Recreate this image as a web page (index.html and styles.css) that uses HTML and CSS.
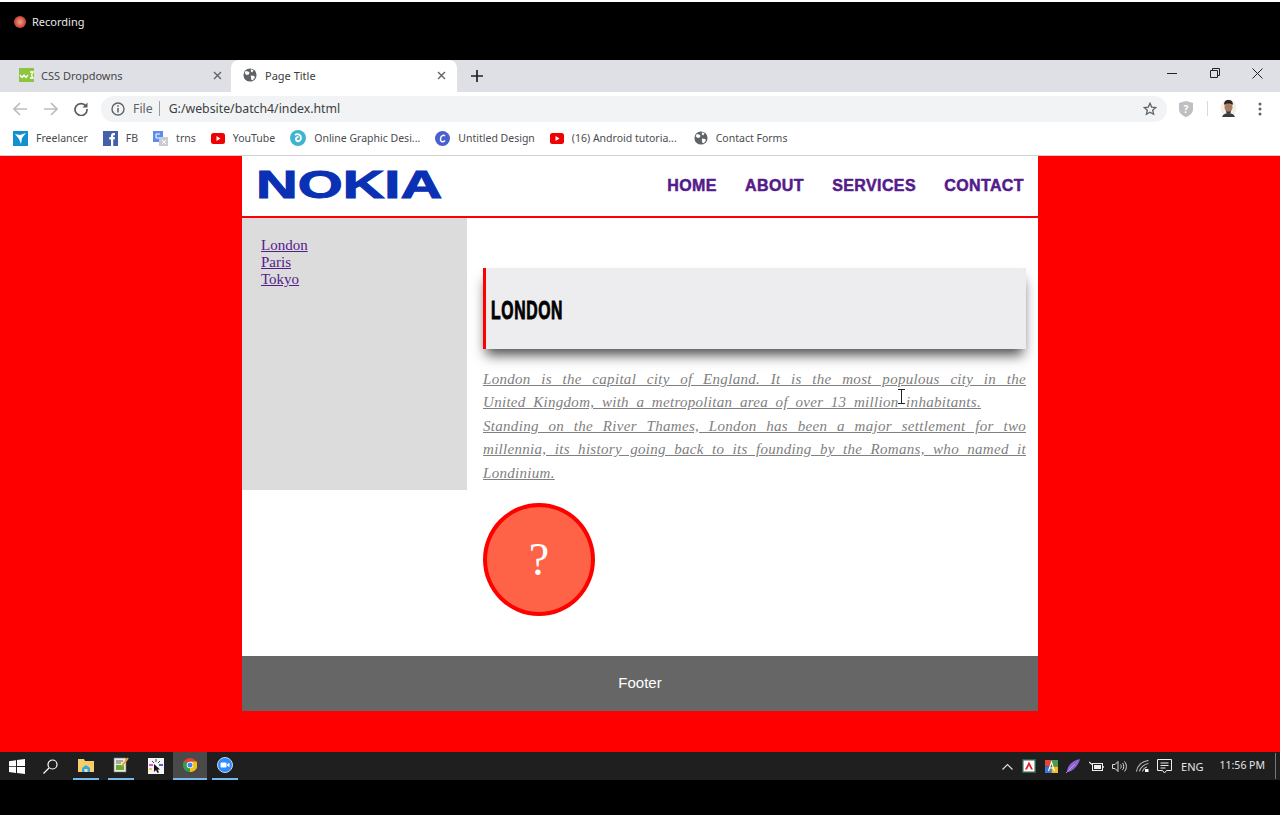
FILE: index.html
```html
<!DOCTYPE html>
<html lang="en">
<head>
  <meta charset="UTF-8" />
  <meta name="viewport" content="width=device-width, initial-scale=1.0" />
  <title>Page Title</title>
  <link rel="stylesheet" href="styles.css">
</head>
<body>
  <svg class="defs" width="0" height="0">
    <symbol id="globe" viewBox="0 0 16 16">
      <circle cx="8" cy="8" r="7.500" fill="#5f6368"/>
      <path d="M3 3.500l3 .5 1.500 1.500-1 2-2.500.5-2-2zM9 1.500l3 1-1.500 2.500-1.500-1zM9 8.500l4 .5.500 2-2.500 3-1.500-.5-.5-3z" fill="#fff"/>
    </symbol>
    <symbol id="yt" viewBox="0 0 14 11">
      <rect width="14" height="11" rx="2.500" fill="#f00000"/>
      <path d="M5.500 3v5l4-2.500z" fill="#fff"/>
    </symbol>
  </svg>

  <div class="screen">
    <div class="rec-bar">
      <span class="rec-dot"></span>
      <span>Recording</span>
    </div>

    <div class="tabstrip">
      <div class="tab">
        <svg class="fav" width="15" height="14" viewBox="0 0 15 14"><rect width="15" height="14" fill="#8cc63f"/><path d="M1 7l2 2.500 2-2.500 2 2.500 2-2.500M11 4h3l-1.500 3 1.500 3h-3" fill="none" stroke="#fff" stroke-width="1.300"/></svg>
        <span class="tab-title">CSS Dropdowns</span>
        <svg class="tab-x" width="9" height="9" viewBox="0 0 9 9"><path d="M1 1l7 7M8 1l-7 7" stroke="#5f6368" stroke-width="1.400"/></svg>
      </div>
      <div class="tab tab-active">
        <svg class="fav" width="14" height="14"><use href="#globe"/></svg>
        <span class="tab-title">Page Title</span>
        <svg class="tab-x" width="9" height="9" viewBox="0 0 9 9"><path d="M1 1l7 7M8 1l-7 7" stroke="#5f6368" stroke-width="1.400"/></svg>
      </div>
      <svg class="new-tab" width="12" height="12" viewBox="0 0 12 12"><path d="M6 0v12M0 6h12" stroke="#222" stroke-width="1.700"/></svg>
      <div class="win-btns">
        <svg width="10" height="10" viewBox="0 0 10 10"><path d="M0 5.500h10" stroke="#222" stroke-width="1"/></svg>
        <svg width="10" height="10" viewBox="0 0 10 10"><path d="M.5 2.500h7v7h-7zM2.500 2.500v-2h7v7h-2" fill="none" stroke="#222" stroke-width="1"/></svg>
        <svg width="11" height="11" viewBox="0 0 11 11"><path d="M.5.500l10 10M10.500.500l-10 10" stroke="#222" stroke-width="1"/></svg>
      </div>
    </div>

    <div class="toolbar">
      <div class="nav-btns">
        <svg width="14" height="14" viewBox="0 0 14 14"><path d="M14 7H1.500M7 1L1 7l6 6" fill="none" stroke="#bcbdc0" stroke-width="1.700"/></svg>
        <svg width="14" height="14" viewBox="0 0 14 14"><path d="M0 7h12.500M7 1l6 6-6 6" fill="none" stroke="#bcbdc0" stroke-width="1.700"/></svg>
        <svg width="14" height="14" viewBox="0 0 14 14"><path d="M12 4.200A6 6 0 1 0 13 7" fill="none" stroke="#5a5c60" stroke-width="1.700"/><path d="M13.500.500v5h-5z" fill="#5a5c60"/></svg>
      </div>
      <div class="omnibox">
        <svg width="14" height="14" viewBox="0 0 14 14"><circle cx="7" cy="7" r="6" fill="none" stroke="#5f6368" stroke-width="1.400"/><path d="M7 6v4.500M7 3.200v1.600" stroke="#5f6368" stroke-width="1.500"/></svg>
        <span class="scheme">File</span>
        <span class="url">G:/website/batch4/index.html</span>
        <svg class="star" width="14" height="14" viewBox="0 0 14 14"><path d="M7 1.300l1.700 3.800 4.100.4-3.100 2.700.9 4.100L7 10.200l-3.600 2.100.9-4.100L1.200 5.500l4.100-.4z" fill="none" stroke="#5f6368" stroke-width="1.300"/></svg>
      </div>
      <svg class="shield" width="14" height="16" viewBox="0 0 14 16"><path d="M7 0l7 2v6c0 4-3 6.500-7 8-4-1.500-7-4-7-8V2z" fill="#bdbfc2"/><text x="7" y="12" text-anchor="middle" class="shield-q">?</text></svg>
      <span class="tool-sep"></span>
      <svg class="avatar" width="17" height="19" viewBox="0 0 17 19"><ellipse cx="8.500" cy="9" rx="8" ry="9" fill="#f3eee8"/><ellipse cx="8.500" cy="8" rx="4" ry="5" fill="#a77d62"/><path d="M4 6c0-4 2-5 4.500-5S13 2 13 6c-2-2-7-2-9 0z" fill="#2a2523"/><path d="M6 11c1 2 4 2 5 0l-.5 3h-4z" fill="#3a302c"/><path d="M2 18c1-3 4-4 6.500-4s5.500 1 6.500 4z" fill="#3b3a3c"/></svg>
      <svg class="dots" width="4" height="14" viewBox="0 0 4 14"><circle cx="2" cy="2" r="1.500" fill="#5f6368"/><circle cx="2" cy="7" r="1.500" fill="#5f6368"/><circle cx="2" cy="12" r="1.500" fill="#5f6368"/></svg>
    </div>

    <div class="bookmarks">
      <a class="bm">
        <svg width="15" height="15" viewBox="0 0 15 15"><rect width="15" height="15" fill="#1291d0"/><path d="M2 3l5 1 6-2-4 5-1 6-2-5z" fill="#fff"/></svg>
        <span>Freelancer</span>
      </a>
      <a class="bm">
        <svg width="15" height="15" viewBox="0 0 15 15"><rect width="15" height="15" fill="#4460a8"/><path d="M8 15V8.500H6.300V6H8V4.500C8 3 9 2 10.300 2h1.700v2.300h-1c-.6 0-.8.300-.8.800V6H12l-.4 2.500h-1.400V15z" fill="#fff"/></svg>
        <span>FB</span>
      </a>
      <a class="bm">
        <svg width="15" height="15" viewBox="0 0 15 15"><rect width="10" height="11" fill="#5b8def"/><rect x="6" y="6" width="9" height="9" fill="#c9ccd2"/><path d="M3 3h4M3 3v4h3M9 9l4 4M13 9l-4 4" fill="none" stroke="#fff" stroke-width="1"/></svg>
        <span>trns</span>
      </a>
      <a class="bm">
        <svg width="14" height="11"><use href="#yt"/></svg>
        <span>YouTube</span>
      </a>
      <a class="bm">
        <svg width="16" height="16" viewBox="0 0 16 16"><circle cx="8" cy="8" r="8" fill="#3fb4cf"/><path d="M5 5c3-2 6 0 6 3s-3 4-4.500 2.500S6 7 8.500 7" fill="none" stroke="#fff" stroke-width="1.800"/></svg>
        <span>Online Graphic Desi...</span>
      </a>
      <a class="bm">
        <svg width="15" height="15" viewBox="0 0 15 15"><circle cx="7.500" cy="7.500" r="7.500" fill="#4a5fd0"/><path d="M10 5C8.500 3.500 6 4.500 5.500 7.500S7.500 12 10 9.500" fill="none" stroke="#fff" stroke-width="1.400"/></svg>
        <span>Untitled Design</span>
      </a>
      <a class="bm">
        <svg width="14" height="11"><use href="#yt"/></svg>
        <span>(16) Android tutoria...</span>
      </a>
      <a class="bm bm-last">
        <svg width="14" height="14"><use href="#globe"/></svg>
        <span>Contact Forms</span>
      </a>
    </div>

    <div class="viewport">
      <div class="wrap">
        <header class="site-head">
          <div class="logo"><span>NOKIA</span></div>
          <nav class="main-nav">
            <a href="#">HOME</a>
            <a href="#">ABOUT</a>
            <a href="#">SERVICES</a>
            <a href="#">CONTACT</a>
          </nav>
        </header>

        <div class="columns">
          <aside class="side">
            <a href="#">London</a>
            <a href="#">Paris</a>
            <a href="#">Tokyo</a>
          </aside>
          <main class="content">
            <div class="title-card"><h2>LONDON</h2></div>
            <p class="intro">London is the capital city of England. It is the most populous city in the United Kingdom, with a metropolitan area of over 13 million inhabitants.<br>Standing on the River Thames, London has been a major settlement for two millennia, its history going back to its founding by the Romans, who named it Londinium.</p>
            <div class="circle">?</div>
            <svg class="ibeam" width="7" height="15" viewBox="0 0 7 15"><path d="M0 .5h7M0 14.500h7M3.500 .5v14" stroke="#222" stroke-width="1" fill="none"/></svg>
          </main>
        </div>

        <footer class="site-foot">Footer</footer>
      </div>
    </div>

    <div class="taskbar">
      <div class="task-left">
        <svg class="t-win" width="16" height="15" viewBox="0 0 16 15"><path d="M0 2.200l7-1v6H0zM8 1l8-1v7H8zM0 8h7v6l-7-1zM8 8h8v7l-8-1z" fill="#fff"/></svg>
        <svg class="t-search" width="15" height="15" viewBox="0 0 15 15"><circle cx="9.500" cy="5.500" r="4.500" fill="none" stroke="#fff" stroke-width="1.200"/><path d="M6 9l-5.500 5.500" stroke="#fff" stroke-width="1.300"/></svg>
        <span class="t-app on">
          <svg width="16" height="14" viewBox="0 0 16 14"><path d="M0 1h6l1 2h9v11H0z" fill="#f5cd6b"/><path d="M4 14v-4l4-3 4 3v4z" fill="#3aa6de"/><path d="M6.500 14v-3h3v3z" fill="#f5e3a8"/></svg>
        </span>
        <span class="t-app on">
          <svg width="16" height="16" viewBox="0 0 16 16"><rect x="1" y="1" width="12" height="14" fill="#e9ecdf" stroke="#777" stroke-width=".6"/><rect x="3" y="8" width="8" height="5" fill="#6aa834"/><path d="M3 4h7M3 6h5" stroke="#666" stroke-width="1"/><path d="M15 1L9 9" stroke="#e8a33a" stroke-width="2"/></svg>
        </span>
        <span class="t-app">
          <svg width="16" height="16" viewBox="0 0 16 16"><rect width="16" height="16" fill="#f4f4f4"/><path d="M1 7h4" stroke="#d61fd6" stroke-width="1.500"/><path d="M11 7h4" stroke="#2a2ad0" stroke-width="1.500"/><path d="M8 1v3M4 3l2 2M12 3l-2 2" stroke="#444" stroke-width="1"/><path d="M6 6l0 8 2-2 1.500 3 1.500-.8-1.500-2.700h2.500z" fill="#111"/><path d="M1 11h3" stroke="#e8c020" stroke-width="1.500"/></svg>
        </span>
        <span class="t-app t-active on">
          <svg width="14" height="14" viewBox="0 0 14 14"><circle cx="7" cy="7" r="7" fill="#db4437"/><path d="M7 7L1 3.500A7 7 0 0 0 7 14z" fill="#2f9e4f"/><path d="M7 3.500h6.500A7 7 0 0 1 7 14z" fill="#f4c20d"/><circle cx="7" cy="7" r="3.300" fill="#fff"/><circle cx="7" cy="7" r="2.500" fill="#4285f4"/></svg>
        </span>
        <span class="t-app on">
          <svg width="16" height="16" viewBox="0 0 16 16"><circle cx="8" cy="8" r="7.500" fill="#2d8cff" stroke="#c9d6e6" stroke-width="1"/><rect x="3.500" y="5.500" width="6" height="5" rx="1" fill="#fff"/><path d="M10 7.500l2.500-1.800v4.600L10 8.500z" fill="#fff"/></svg>
        </span>
      </div>
      <div class="tray">
        <svg class="t-slot" width="11" height="7" viewBox="0 0 11 7"><path d="M.5 6.500l5-5 5 5" fill="none" stroke="#ddd" stroke-width="1.200"/></svg>
        <svg class="t-slot" width="14" height="14" viewBox="0 0 14 14"><rect width="14" height="14" fill="#2f5f48"/><rect x="1.500" y="1.500" width="11" height="11" fill="#fff"/><path d="M7 2.500l4 8H9L7 6.500 5 10.500H3z" fill="#e3202c"/></svg>
        <svg class="t-slot" width="13" height="13" viewBox="0 0 13 13"><rect width="6.500" height="6.500" fill="#e2483a"/><rect x="6.500" width="6.500" height="6.500" fill="#4a9b4e"/><rect y="6.500" width="6.500" height="6.500" fill="#3b78d8"/><rect x="6.500" y="6.500" width="6.500" height="6.500" fill="#f1bd2b"/><path d="M3.500 11L6.500 2l3 9M4.800 8h3.400" fill="none" stroke="#fff" stroke-width="1.100"/></svg>
        <svg class="t-slot" width="14" height="14" viewBox="0 0 14 14"><path d="M14 0C8 1 2 5 1 12l1.500 1C6 12 12 8 14 0z" fill="#8f62d8"/><path d="M0 14L9 5" stroke="#c6a9f2" stroke-width=".8"/></svg>
        <svg class="t-slot" width="15" height="11" viewBox="0 0 15 11"><rect x="3.500" y="2.500" width="10" height="7" fill="none" stroke="#eee" stroke-width="1"/><rect x="5" y="4" width="7" height="4" fill="#eee"/><path d="M14 5v2" stroke="#eee" stroke-width="1.500"/><path d="M0 1l3 2.500" stroke="#eee" stroke-width="1.200"/></svg>
        <svg class="t-slot" width="15" height="13" viewBox="0 0 15 13"><path d="M.5 4.500h2.500l3-3v10l-3-3H.5z" fill="none" stroke="#ddd" stroke-width="1"/><path d="M8.500 4.500c1 1 1 3 0 4M10.500 3c1.700 2 1.700 5 0 7M12.500 1.500c2.500 3 2.500 7 0 10" fill="none" stroke="#ddd" stroke-width="1"/></svg>
        <svg class="t-slot" width="13" height="12" viewBox="0 0 13 12"><path d="M.5 11.500C1 6 6 1 12.500.5M3.500 11.500C4 8 8 4 12.500 3.500M6.500 11.500C7 10 9 7 11 7" fill="none" stroke="#bbb" stroke-width="1.100"/><rect x="9" y="9" width="3.500" height="3" fill="#fff"/></svg>
        <svg class="t-slot" width="15" height="15" viewBox="0 0 15 15"><path d="M.5.500h14v11H9.500l-2 2.500-2-2.500H.5z" fill="none" stroke="#eee" stroke-width="1"/><path d="M3.500 4h8M3.500 6.500h8M3.500 9h5" stroke="#eee" stroke-width="1"/></svg>
        <span class="lang">ENG</span>
        <span class="clock">11:56 PM</span>
        <span class="show-desk"></span>
      </div>
    </div>
    <div class="bottom-bar"></div>
  </div>
</body>
</html>
```

FILE: styles.css
```css
body {
  margin: 0;
  background: #fff;
  font-family: "Noto Sans", "Open Sans", sans-serif;
  overflow: hidden;
}
a {
  text-decoration: none;
}
.defs {
  position: absolute;
}
.screen {
  width: 1280px;
  height: 815px;
  padding-top: 2px;
  box-sizing: border-box;
  display: flex;
  flex-direction: column;
}

/* recording bar */
.rec-bar {
  height: 58px;
  background: #000;
  color: #e8e8e8;
  font-size: 11px;
  display: flex;
  align-items: flex-start;
  padding: 12px 0 0 14px;
  box-sizing: border-box;
  gap: 6px;
}
.rec-dot {
  width: 12px;
  height: 12px;
  margin-top: 2px;
  border-radius: 50%;
  background: radial-gradient(circle, #f0a090 0%, #c9402f 70%, #8a3328 100%);
}

/* browser chrome */
.tabstrip {
  height: 32px;
  background: #dfe0e5;
  display: flex;
  align-items: center;
  font-size: 11px;
  color: #45474b;
}
.tab {
  height: 32px;
  box-sizing: border-box;
  width: 231px;
  display: flex;
  align-items: center;
  padding: 0 9px 2px 19px;
}
.tab-active {
  width: 226px;
  padding-left: 12px;
  padding-right: 11px;
  background: #fff;
  border-radius: 8px 8px 0 0;
  color: #3c3c3c;
}
.fav {
  flex: none;
  margin-right: 7px;
}
.tab-active .fav {
  margin-right: 8px;
}
.tab-title {
  flex: 1;
}
.new-tab {
  margin-left: 14px;
}
.win-btns {
  margin-left: auto;
  width: 96px;
  margin-right: 17px;
  display: flex;
  justify-content: space-between;
  align-items: center;
  margin-top: -6px;
}
.toolbar {
  height: 32px;
  box-sizing: border-box;
  padding-top: 1px;
  background: #fff;
  display: flex;
  align-items: center;
}
.nav-btns {
  width: 101px;
  padding-left: 13px;
  padding-right: 13px;
  box-sizing: border-box;
  display: flex;
  justify-content: space-between;
}
.omnibox {
  width: 1066px;
  height: 26px;
  box-sizing: border-box;
  background: #f1f3f4;
  border-radius: 13px;
  display: flex;
  align-items: center;
  padding: 0 10px;
  font-size: 12.300px;
  color: #3c4043;
}
.scheme {
  margin-left: 8px;
  padding-right: 6px;
  border-right: 1px solid #9a9ea3;
  line-height: 15px;
  color: #5f6368;
}
.url {
  margin-left: 9px;
  flex: 1;
}
.shield {
  margin-left: 12px;
}
.shield-q {
  font-size: 10px;
  font-weight: 700;
  fill: #fff;
}
.tool-sep {
  width: 1px;
  height: 15px;
  background: #d8d9db;
  margin-left: 14px;
}
.avatar {
  margin-left: 12px;
}
.dots {
  margin-left: 21px;
}
.bookmarks {
  height: 32px;
  box-sizing: border-box;
  background: #fff;
  border-bottom: 1px solid #d0d1d3;
  display: flex;
  align-items: center;
  padding: 0 0 3px 13px;
  gap: 15px;
  font-size: 10.500px;
  color: #4a4c50;
}
.bm {
  display: flex;
  align-items: center;
  gap: 8px;
}
.bm-last {
  margin-left: 2px;
}

/* the page being viewed */
.viewport {
  flex: 1;
  background: #f00;
}
.wrap {
  width: 796px;
  margin-left: 242px;
  background: #fff;
}
.site-head {
  height: 62px;
  box-sizing: border-box;
  border-bottom: 2px solid #f00;
  display: flex;
  align-items: center;
  justify-content: space-between;
  padding: 0 14px 2px 14px;
}
.logo span {
  display: block;
  font-family: "Liberation Sans", Arial, sans-serif;
  font-weight: 700;
  font-size: 38px;
  line-height: 36px;
  color: #0a30b4;
  -webkit-text-stroke: 1px #0a30b4;
  transform: scaleX(1.52);
  transform-origin: left center;
}
.main-nav {
  display: flex;
  gap: 28.200px;
  margin-top: 1px;
}
.main-nav a {
  font-family: "Liberation Sans", Arial, sans-serif;
  font-weight: 700;
  font-size: 16px;
  letter-spacing: 0.400px;
  color: #551a8b;
  -webkit-text-stroke: 0.500px #551a8b;
}
.columns {
  display: flex;
  align-items: flex-start;
}
.side {
  width: 225px;
  height: 272px;
  box-sizing: border-box;
  background: #dcdcdc;
  padding: 19px 0 0 19px;
  flex: none;
}
.side a {
  display: block;
  width: fit-content;
  font-family: "Liberation Serif", "Times New Roman", serif;
  font-size: 15px;
  line-height: 17px;
  color: #551a8b;
  text-decoration: underline;
}
.content {
  flex: 1;
  position: relative;
  padding: 50px 12px 40px 16px;
}
.title-card {
  height: 81px;
  box-sizing: border-box;
  background: #edecef;
  border-left: 3px solid #f00;
  box-shadow: 0 9px 12px -3px rgba(0, 0, 0, 0.7);
  padding: 28px 0 0 5px;
}
.title-card h2 {
  margin: 0;
  font-family: "Liberation Sans", Arial, sans-serif;
  font-size: 25px;
  line-height: 28px;
  letter-spacing: 1px;
  color: #000;
  -webkit-text-stroke: 0.900px #000;
  transform: scaleX(0.63);
  transform-origin: left center;
}
.intro {
  margin: 19px 0 18px;
  font-family: "Liberation Serif", "Times New Roman", serif;
  font-style: italic;
  font-size: 15px;
  letter-spacing: 0.300px;
  line-height: 23.400px;
  color: #808080;
  text-align: justify;
  text-decoration: underline;
  word-spacing: 3.500px;
}
.circle {
  width: 112px;
  height: 113px;
  box-sizing: border-box;
  border: 4px solid #f00;
  border-radius: 50%;
  background: #ff6347;
  color: #fff;
  font-family: "Liberation Serif", "Times New Roman", serif;
  font-size: 46px;
  display: flex;
  align-items: center;
  justify-content: center;
}
.ibeam {
  position: absolute;
  left: 431px;
  top: 171px;
}
.site-foot {
  height: 55px;
  box-sizing: border-box;
  padding-bottom: 2px;
  background: #666;
  color: #fff;
  font-family: "Liberation Sans", Arial, sans-serif;
  font-size: 15px;
  display: flex;
  align-items: center;
  justify-content: center;
}

/* windows taskbar */
.taskbar {
  height: 28px;
  background: #1f1f1f;
  display: flex;
  justify-content: space-between;
  align-items: center;
  color: #e6e6e6;
  font-size: 11px;
}
.task-left {
  display: flex;
  align-items: center;
  height: 28px;
}
.t-win {
  margin-left: 9px;
}
.t-search {
  margin: 0 15px 0 18px;
}
.t-app {
  width: 26px;
  height: 28px;
  box-sizing: border-box;
  margin-right: 9px;
  display: flex;
  align-items: center;
  justify-content: center;
}
.t-app.on {
  border-bottom: 2px solid #76b9ed;
}
.t-active {
  width: 34px;
  margin: 0 5px 0 -5px;
  background: #4a4a4a;
}
.tray {
  display: flex;
  align-items: center;
  height: 28px;
}
.t-slot {
  margin-right: 8.600px;
}
.lang {
  margin-left: 0;
}
.clock {
  margin-left: 16px;
  margin-bottom: 3px;
  font-size: 10.500px;
}
.show-desk {
  width: 1px;
  height: 26px;
  background: #777;
  margin: 0 4px 0 10px;
}
.bottom-bar {
  height: 35px;
  background: #000;
}
```
